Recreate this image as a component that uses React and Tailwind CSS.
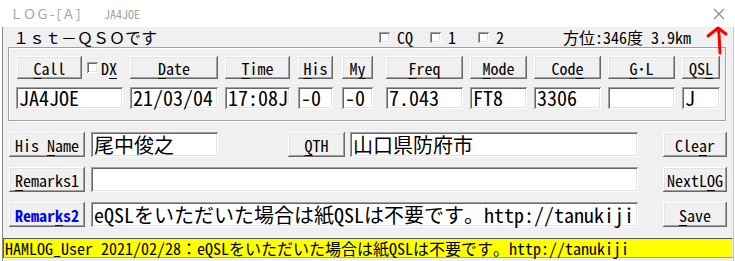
import React from "react";

// HAMLOG 入力ウィンドウの再現
const font = "font-['Noto_Sans_Mono_CJK_JP','Noto_Sans_CJK_JP',monospace]";

const btnBase =
  "flex items-center justify-center bg-[#f0f0f0] text-[16px] leading-none whitespace-nowrap shadow-[inset_-1px_-1px_0_#696969,inset_1px_1px_0_#ffffff,inset_-2px_-2px_0_#a0a0a0,inset_2px_2px_0_#e3e3e3]";
const btnCls = `${btnBase} text-black`;

const boxCls =
  "flex items-center bg-white pl-[3px] text-[20px] leading-[22px] text-black whitespace-nowrap shadow-[inset_1px_1px_0_#a0a0a0,inset_-1px_-1px_0_#ffffff,inset_2px_2px_0_#696969,inset_-2px_-2px_0_#e3e3e3]";

const checkCls =
  "w-[11px] h-[11px] bg-white shadow-[inset_1px_1px_0_#a0a0a0,inset_-1px_-1px_0_#ffffff,inset_2px_2px_0_#696969,inset_-2px_-2px_0_#e3e3e3]";

const U = ({ children }) => (
  <span className="underline underline-offset-[3px] decoration-1">{children}</span>
);

const columns = [
  { key: "date", ml: "ml-[7px]", w: "w-[88px]", label: <><U>D</U>ate</>, value: "21/03/04" },
  { key: "time", ml: "ml-[7px]", w: "w-[65px]", label: <><U>T</U>ime</>, value: "17:08J" },
  { key: "his", ml: "ml-[8px]", w: "w-[35px]", label: <><U>H</U>is</>, value: "-0" },
  { key: "my", ml: "ml-[9px]", w: "w-[31px]", label: <>M<U>y</U></>, value: "-0" },
  { key: "freq", ml: "ml-[13px]", w: "w-[77px]", label: <><U>F</U>req</>, value: "7.043" },
  { key: "mode", ml: "ml-[7px]", w: "w-[57px]", label: <><U>M</U>ode</>, value: "FT8" },
  { key: "code", ml: "ml-[7px]", w: "w-[67px]", label: <>Cod<U>e</U></>, value: "3306" },
  { key: "gl", ml: "ml-[7px]", w: "w-[67px]", label: <><U>G</U>･L</>, value: "" },
  { key: "qsl", ml: "ml-[7px]", w: "w-[38px]", label: <>QS<U>L</U></>, value: "J" },
];

const Check = ({ label, ml }) => (
  <div className={`flex items-center ${ml}`}>
    <div className={checkCls} />
    <span className="ml-[7px] text-[16px] leading-none">{label}</span>
  </div>
);

const App = () => {
  return (
    <div className={`w-[735px] h-[261px] bg-white relative overflow-hidden text-black ${font}`}>
      {/* タイトルバー */}
      <div className="h-[27px] flex items-center">
        <span className="ml-[10px] w-[94px] text-[13px] text-[#a8a29a]">ＬＯＧ-[Ａ]</span>
        <span className="text-[12px] text-[#a8a29a]">JA4JOE</span>
      </div>
      <svg className="absolute left-[713px] top-[8px]" width="12" height="12" viewBox="0 0 12 12">
        <path d="M1 1 L11 11 M11 1 L1 11" stroke="#8c8c8c" strokeWidth="1.2" fill="none" />
      </svg>

      <div className="h-[234px] ml-[2px] mr-[1px] border-l border-r border-l-[#8a8a8a] border-r-[#c8c8c8] bg-[#f0f0f0]">
        {/* 上段ラベル */}
        <div className="h-[20px] flex items-center">
          <span className="ml-[10px] w-[366px] text-[16px] leading-none">１ｓｔ－ＱＳＯです</span>
          <Check label="CQ" ml="ml-0" />
          <Check label="1" ml="ml-[17px]" />
          <Check label="2" ml="ml-[22px]" />
          <span className="ml-auto mr-[42px] text-[16px] leading-none">方位:346度 3.9km</span>
        </div>

        {/* QSOデータ枠 */}
        <div className="ml-[5px] w-[718px] h-[74px] border border-[#a0a0a0] shadow-[inset_1px_1px_0_#ffffff,1px_1px_0_#ffffff] pt-[8px] pl-[7px] flex">
          <div className="w-[107px] flex flex-col gap-[8px]">
            <div className="flex items-center h-[23px]">
              <div className={`${btnCls} ml-[1px] w-[65px] h-[23px]`}>
                <span>
                  <U>C</U>all
                </span>
              </div>
              <div className={`${checkCls} ml-[5px]`} />
              <span className="ml-[3px] text-[16px] leading-none">
                D<U>X</U>
              </span>
            </div>
            <div className={`${boxCls} w-[107px] h-[22px]`}>JA4JOE</div>
          </div>
          {columns.map((c) => (
            <div key={c.key} className={`${c.ml} ${c.w} flex flex-col gap-[8px]`}>
              <div className={`${btnCls} w-full h-[23px]`}>
                <span>{c.label}</span>
              </div>
              <div className={`${boxCls} w-full h-[22px]`}>{c.value}</div>
            </div>
          ))}
        </div>

        {/* 名前・QTH・備考 */}
        <div className="ml-[6px] mt-[11px] flex flex-col gap-[10px]">
          <div className="flex h-[25px]">
            <div className={`${btnCls} w-[76px]`}>
              <span>
                His <U>N</U>ame
              </span>
            </div>
            <div className={`${boxCls} ml-[6px] w-[127px]`}>尾中俊之</div>
            <div className={`${btnCls} ml-[70px] w-[57px]`}>
              <span>
                <U>Q</U>TH
              </span>
            </div>
            <div className={`${boxCls} ml-[5px] w-[288px]`}>山口県防府市</div>
            <div className={`${btnCls} ml-[25px] w-[64px]`}>
              <span>
                Cle<U>a</U>r
              </span>
            </div>
          </div>
          <div className="flex h-[25px]">
            <div className={`${btnCls} w-[76px]`}>
              <span>
                <U>R</U>emarks1
              </span>
            </div>
            <div className={`${boxCls} ml-[6px] w-[547px]`}></div>
            <div className={`${btnCls} ml-[25px] w-[64px]`}>
              <span>
                NextL<U>O</U>G
              </span>
            </div>
          </div>
          <div className="flex h-[25px]">
            <div className={`${btnBase} w-[76px] font-bold text-[#0000ff]`}>
              <span>
                Remar<U>k</U>s2
              </span>
            </div>
            <div className={`${boxCls} ml-[6px] w-[547px]`}>
              eQSLをいただいた場合は紙QSLは不要です。http://tanukiji
            </div>
            <div className={`${btnCls} ml-[25px] w-[64px]`}>
              <span>
                <U>S</U>ave
              </span>
            </div>
          </div>
        </div>

        {/* ステータスバー */}
        <div className="mt-[11px] h-[20px] flex items-center bg-[#ffff00] border border-t-[#5a5a5a] border-l-[#5a5a5a] border-r-[#e3e3e3] border-b-[#a0a0a0] pl-[1px] text-[16px] leading-[18px] whitespace-nowrap">
          HAMLOG_User 2021/02/28：eQSLをいただいた場合は紙QSLは不要です。http://tanukiji
        </div>
      </div>

      {/* 赤い矢印（注釈） */}
      <svg className="absolute left-[704px] top-[24px]" width="28" height="32" viewBox="0 0 28 32">
        <path
          d="M4 12 L14 4 L22 10 M14 4 L15 10 L16 29"
          stroke="#ff0000"
          strokeWidth="3"
          strokeLinecap="round"
          strokeLinejoin="round"
          fill="none"
        />
      </svg>
    </div>
  );
};

export default App;
